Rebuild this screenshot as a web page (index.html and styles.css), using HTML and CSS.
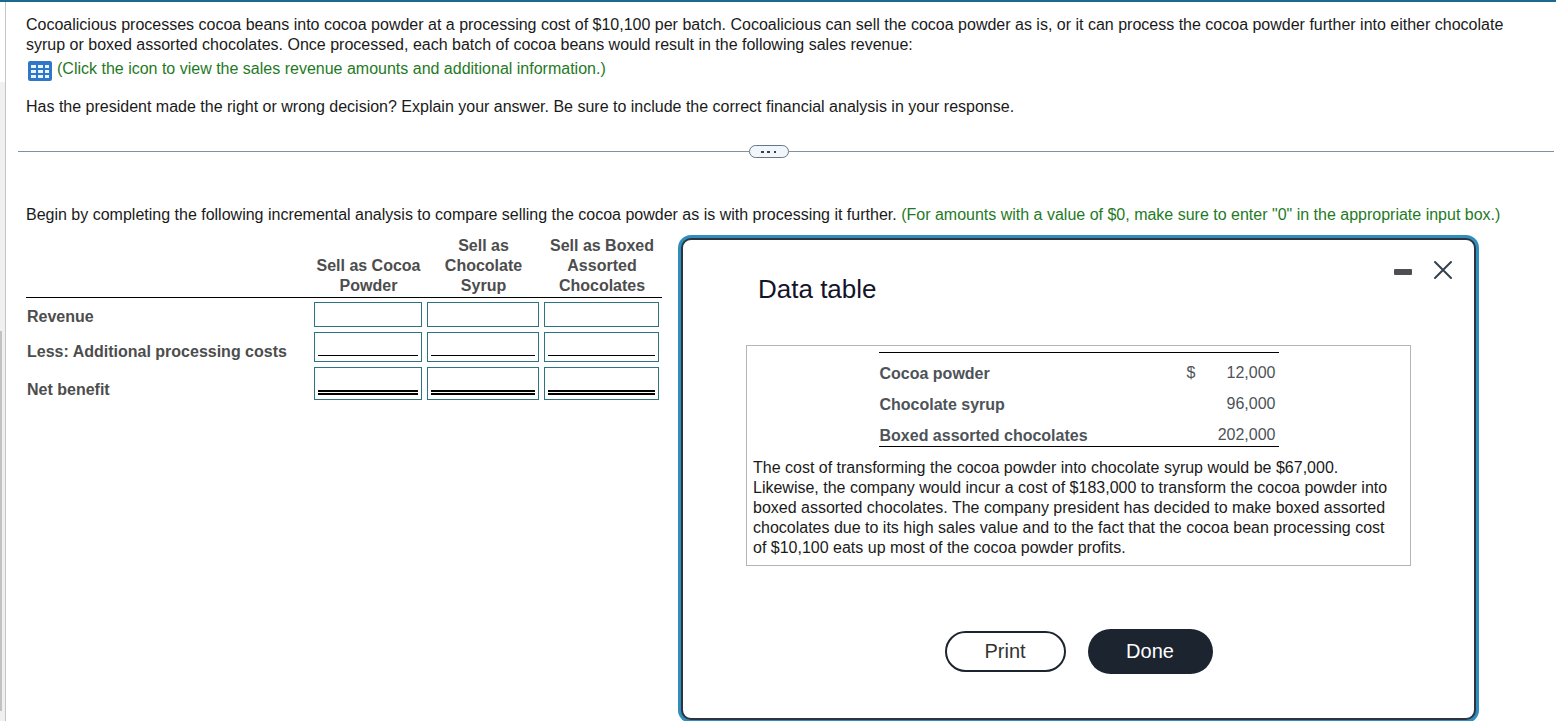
FILE: index.html
```html
<!DOCTYPE html>
<html lang="en">
<head>
    <meta charset="UTF-8">
    <meta name="viewport" content="width=device-width, initial-scale=1.0">
    <title>Incremental analysis</title>
    <link rel="stylesheet" href="styles.css">
</head>
<body>
    <div class="rail">
        <div class="track">
            <div class="thumb"></div>
        </div>
    </div>
    <main class="content">
        <section class="problem">
            <p>Cocoalicious processes cocoa beans into cocoa powder at a processing cost of $10,100 per batch. Cocoalicious can sell the cocoa powder as is, or it can process the cocoa powder further into either chocolate syrup or boxed assorted chocolates. Once processed, each batch of cocoa beans would result in the following sales revenue:</p>
            <a class="data-link" href="#dataTable">
                <svg width="24" height="20" viewBox="0 0 24 20">
                    <rect width="24" height="20" rx="2" fill="#2f78c8"/>
                    <path fill="#e8f4ff" d="M3 4h5v3H3zM10 4h5v3h-5zM17 4h4v3h-4zM3 9h5v3H3zM10 9h5v3h-5zM17 9h4v3h-4zM3 14h5v3H3zM10 14h5v3h-5zM17 14h4v3h-4z"/>
                </svg>
                <span>(Click the icon to view the sales revenue amounts and additional information.)</span>
            </a>
            <p>Has the president made the right or wrong decision? Explain your answer. Be sure to include the correct financial analysis in your response.</p>
        </section>

        <div class="divider">
            <button class="expand" aria-label="Expand">
                <svg width="16" height="4" viewBox="0 0 16 4">
                    <path fill="#33414f" d="M0 1h3v2H0zM6 1h3v2H6zM13 1h2v2h-2z"/>
                </svg>
            </button>
        </div>

        <p class="task">Begin by completing the following incremental analysis to compare selling the cocoa powder as is with processing it further. <span class="hint">(For amounts with a value of $0, make sure to enter "0" in the appropriate input box.)</span></p>

        <div class="work">
            <table class="analysis">
                <thead>
                    <tr>
                        <td class="col-label"></td>
                        <th class="col-powder">Sell as Cocoa Powder</th>
                        <th class="col-syrup">Sell as Chocolate Syrup</th>
                        <th class="col-boxed">Sell as Boxed Assorted Chocolates</th>
                    </tr>
                </thead>
                <tbody>
                    <tr class="revenue">
                        <th>Revenue</th>
                        <td><div class="cell"><input type="text" aria-label="Revenue, cocoa powder"></div></td>
                        <td><div class="cell"><input type="text" aria-label="Revenue, chocolate syrup"></div></td>
                        <td><div class="cell"><input type="text" aria-label="Revenue, boxed chocolates"></div></td>
                    </tr>
                    <tr class="costs">
                        <th>Less: Additional processing costs</th>
                        <td><div class="cell"><input type="text" aria-label="Costs, cocoa powder"></div></td>
                        <td><div class="cell"><input type="text" aria-label="Costs, chocolate syrup"></div></td>
                        <td><div class="cell"><input type="text" aria-label="Costs, boxed chocolates"></div></td>
                    </tr>
                    <tr class="net">
                        <th>Net benefit</th>
                        <td><div class="cell"><input type="text" aria-label="Net benefit, cocoa powder"></div></td>
                        <td><div class="cell"><input type="text" aria-label="Net benefit, chocolate syrup"></div></td>
                        <td><div class="cell"><input type="text" aria-label="Net benefit, boxed chocolates"></div></td>
                    </tr>
                </tbody>
            </table>

            <div class="dialog" id="dataTable" role="dialog" aria-labelledby="dialogTitle">
                <div class="dialog-head">
                    <h2 id="dialogTitle">Data table</h2>
                    <div class="dialog-controls">
                        <button aria-label="Minimize">
                            <svg width="20" height="20" viewBox="0 0 20 20">
                                <rect x="1" y="9" width="18" height="6" rx="1" fill="#4d4f53"/>
                            </svg>
                        </button>
                        <button aria-label="Close">
                            <svg width="20" height="20" viewBox="0 0 20 20">
                                <path d="M2 2l16 16M18 2L2 18" stroke="#33414d" stroke-width="2" stroke-linecap="round"/>
                            </svg>
                        </button>
                    </div>
                </div>
                <div class="dialog-box">
                    <table class="amounts">
                        <tr>
                            <th>Cocoa powder</th>
                            <td>$</td>
                            <td>12,000</td>
                        </tr>
                        <tr>
                            <th>Chocolate syrup</th>
                            <td></td>
                            <td>96,000</td>
                        </tr>
                        <tr>
                            <th>Boxed assorted chocolates</th>
                            <td></td>
                            <td>202,000</td>
                        </tr>
                    </table>
                    <p>The cost of transforming the cocoa powder into chocolate syrup would be $67,000. Likewise, the company would incur a cost of $183,000 to transform the cocoa powder into boxed assorted chocolates. The company president has decided to make boxed assorted chocolates due to its high sales value and to the fact that the cocoa bean processing cost of $10,100 eats up most of the cocoa powder profits.</p>
                </div>
                <div class="dialog-actions">
                    <button class="print">Print</button>
                    <button class="done">Done</button>
                </div>
            </div>
        </div>
    </main>
</body>
</html>
```

FILE: styles.css
```css
* {
    box-sizing: border-box;
}

body {
    display: flex;
    min-height: 100vh;
    margin: 0;
    border-top: 2px solid #1b6a8c;
    overflow: hidden;
    font-family: "Liberation Sans", Arial, sans-serif;
    font-size: 16px;
    line-height: 20px;
    color: #1a1a1a;
    background: white;
}

p, h2 {
    margin: 0;
}

button {
    padding: 0;
    font-family: inherit;
    cursor: pointer;
}

svg {
    display: block;
}

/* left scrollbar */
.rail {
    display: flex;
    width: 6px;
    padding-top: 80px;
    border-right: 1px solid #c4c4c4;
}

.track {
    display: flex;
    flex: 1;
    padding: 249px 3px 10px 0;
    background: #f0f0f0;
}

.thumb {
    flex: 1;
    background: #c1c1c1;
}

.content {
    flex: 1;
    height: calc(100vh - 2px);
    padding-top: 13px;
}

.problem {
    padding: 0 20px;
}

.data-link {
    display: flex;
    gap: 5px;
    padding: 4px 2px 16px;
    color: #1f7a1f;
    text-decoration: none;
}

.data-link svg {
    margin-top: 2px;
}

.divider {
    display: flex;
    align-items: center;
    margin: 28px 2px 47px 12px;
}

.divider::before, .divider::after {
    content: "";
    height: 1px;
    background: #84909a;
    flex: 1;
}

.divider::before {
    flex: 0 0 calc(48% - 6px);
}

.expand {
    display: flex;
    align-items: center;
    justify-content: center;
    width: 40px;
    height: 13px;
    border: 1px solid #667684;
    border-radius: 7px;
    background: #f0f6fa;
}

.task {
    padding: 0 20px;
}

.hint {
    color: #1f7a1f;
}

.work {
    display: flex;
    align-items: flex-start;
    gap: 19px;
    padding: 11px 80px 0 20px;
}

.analysis {
    flex: none;
    width: 636px;
    table-layout: fixed;
    border-collapse: collapse;
    color: #4d4d4d;
}

.analysis th, .analysis td {
    padding: 0;
}

.analysis thead th {
    padding-bottom: 1px;
    vertical-align: bottom;
}

.analysis thead {
    border-bottom: 1px solid black;
}

.col-label {
    width: 286px;
}

.col-powder {
    width: 113px;
}

.col-syrup {
    width: 117px;
}

.analysis tbody th {
    padding-left: 1px;
    text-align: left;
    vertical-align: bottom;
}

.analysis tbody td {
    padding: 5px 3px 0 2px;
}

.analysis .revenue td {
    padding-top: 4px;
}

.cell {
    padding: 0 3px;
    border: 1px solid #2b7480;
}

.cell input {
    display: block;
    width: 100%;
    height: 23px;
    padding: 0;
    border: none;
    outline: none;
    background: none;
    font: inherit;
    text-align: right;
}

.costs .cell {
    padding-bottom: 5px;
}

.costs input {
    border-bottom: 1px solid black;
}

.net .cell {
    padding-bottom: 4px;
}

.net input {
    height: 27px;
    border-bottom: 5px double black;
}

.dialog {
    flex: 1;
    margin-top: 2px;
    padding: 17px 63px 44px;
    border: 2px solid #2b3440;
    border-radius: 10px;
    box-shadow: 0 0 0 3px #2f8ebb;
    background: white;
}

.dialog-head {
    display: flex;
    justify-content: space-between;
    margin-right: -42px;
    padding-left: 12px;
}

.dialog-head h2 {
    margin-top: 16px;
    font-size: 26px;
    line-height: 32px;
    font-weight: normal;
    color: #14142b;
}

.dialog-controls {
    display: flex;
    gap: 20px;
    padding-top: 3px;
}

.dialog-controls button {
    height: 20px;
    border: none;
    background: none;
}

.dialog-box {
    margin-top: 40px;
    padding: 6px 6px 7px;
    border: 1px solid #b5b5b5;
}

.dialog-box p {
    padding-right: 8px;
}

.amounts {
    width: 400px;
    margin: 0 auto 11px;
    border-top: 1px solid black;
    border-bottom: 1px solid black;
    border-collapse: collapse;
    color: #4d5358;
}

.amounts th {
    padding: 11px 0 0 1px;
    text-align: left;
}

.amounts td {
    width: 80px;
    padding: 10px 3px 1px 0;
    text-align: right;
}

.dialog-actions {
    display: flex;
    align-items: center;
    justify-content: center;
    gap: 22px;
    margin-top: 63px;
}

.dialog-actions button {
    border-radius: 23px;
    font-size: 20px;
}

.print {
    width: 121px;
    height: 41px;
    border: 2px solid #1c2430;
    background: white;
    color: #333;
}

.done {
    width: 125px;
    height: 45px;
    border: none;
    background: #1c2430;
    color: white;
}
```
